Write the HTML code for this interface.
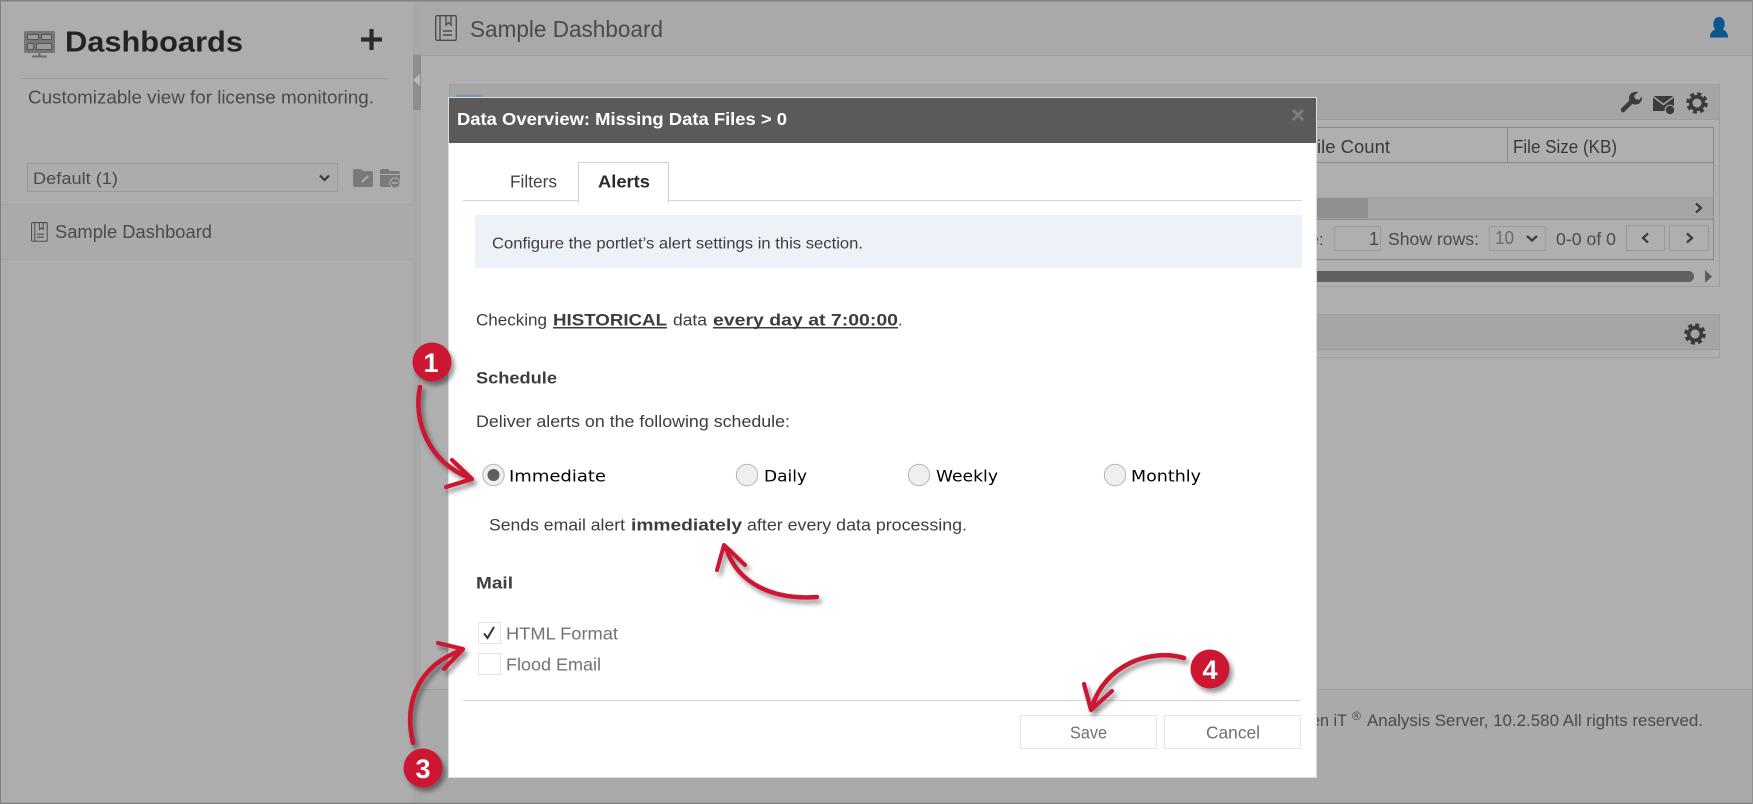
<!DOCTYPE html>
<html><head><meta charset="utf-8"><title>Sample Dashboard</title>
<style>
html,body{margin:0;padding:0;width:1753px;height:804px;overflow:hidden;background:#afafaf}
svg{display:block}
text{font-family:"Liberation Sans",Arial,sans-serif;fill:#484848;font-size:16px}
.b{font-weight:bold}
.d{font-family:"DejaVu Sans",sans-serif;fill:#000;font-size:16px}
.s{fill:#4a4a4a}
.m{fill:#3d3d3d;font-size:16.5px}
</style></head><body>
<svg width="1753" height="804" viewBox="0 0 1753 804" xmlns="http://www.w3.org/2000/svg">
<defs>
<filter id="sh" x="-40%" y="-40%" width="200%" height="200%"><feDropShadow dx="3" dy="4" stdDeviation="2.5" flood-color="#000" flood-opacity=".42"/></filter>
<g id="book" fill="none" stroke="#4e4e4e" stroke-width="1.4"><rect x=".7" y=".7" width="20.6" height="24.6" rx="1.5"/><path d="M5 1v24M11 1v9l2.5-2.5L16 10V1M8 16h9M8 20h9"/></g>
<g id="gear"><circle r="6.3" fill="none" stroke="#3b3b3b" stroke-width="3.6"/><circle r="8.8" fill="none" stroke="#3b3b3b" stroke-width="4" stroke-dasharray="3.9 3"/></g>
</defs>

<!-- backgrounds -->
<rect width="1753" height="804" fill="#afafaf"/>
<rect x="0" y="0" width="413" height="804" fill="#adadad"/>
<rect x="0" y="204" width="413" height="55" fill="#aaaaaa"/>
<rect x="0" y="204" width="413" height="1" fill="#a3a3a3"/>
<rect x="0" y="259" width="413" height="1" fill="#a3a3a3"/>
<rect x="413" y="0" width="8" height="804" fill="#a8a8a8"/>
<rect x="413" y="55" width="8" height="55" fill="#8e8e8e"/>
<path d="M420 74v12l-7-6z" fill="#b8b8b8"/>
<rect x="421" y="0" width="1332" height="55" fill="#a9a9a9"/>
<rect x="421" y="55" width="1332" height="1" fill="#a0a0a0"/>
<rect x="421" y="689" width="1332" height="115" fill="#aaaaaa"/>
<rect x="413" y="689" width="1340" height="1" fill="#9e9e9e"/>
<rect width="1753" height="1.5" fill="#808080"/>
<rect y="802.6" width="1753" height="1.4" fill="#808080"/>
<rect width="1" height="804" fill="#808080"/>
<rect x="1752" width="1" height="804" fill="#909090"/>

<!-- sidebar -->
<rect x="24" y="31" width="31" height="22" rx="1.500" fill="#767676"/>
<g fill="#9a9a9a" stroke="#565656" stroke-width="1">
<rect x="27.500" y="34.500" width="11" height="5"/><rect x="41.500" y="34.500" width="10" height="5"/>
<rect x="27.500" y="43.500" width="6" height="6"/><rect x="36.500" y="43.500" width="15" height="6"/>
</g>
<path d="M39.500 53v3M32 56.500h15" stroke="#6a6a6a" stroke-width="2" fill="none"/>
<text x="65" y="51.500" class="b" style="font-size:29px;fill:#232323" textLength="178" lengthAdjust="spacingAndGlyphs">Dashboards</text>
<path d="M371.500 29v21M361 39.500h21" stroke="#2b2b2b" stroke-width="4.200"/>
<rect x="21" y="78" width="367" height="1" fill="#9d9d9d"/>
<text x="28" y="103.500" style="font-size:18px" class="s" textLength="346" lengthAdjust="spacingAndGlyphs">Customizable view for license monitoring.</text>
<rect x="27.500" y="163.500" width="310" height="28" fill="#acacac" stroke="#9a9a9a"/>
<text x="33" y="184" style="font-size:17px" class="s" textLength="85" lengthAdjust="spacingAndGlyphs">Default (1)</text>
<path d="M320 175.500l4.500 4.500 4.500-4.500" fill="none" stroke="#3a3a3a" stroke-width="2.200"/>
<path d="M353 171q0-2 2-2h6l2 2h8q2 0 2 2v12q0 2-2 2h-16q-2 0-2-2z" fill="#7a7a7a"/>
<path d="M362 182l6-6" stroke="#adadad" stroke-width="2"/>
<path d="M380 171q0-2 2-2h6l2 2h8q2 0 2 2v12q0 2-2 2h-16q-2 0-2-2z" fill="#7a7a7a"/>
<path d="M380 174.500h20" stroke="#adadad"/>
<circle cx="395" cy="183" r="5" fill="#7a7a7a" stroke="#adadad"/><path d="M392 183h6" stroke="#adadad" stroke-width="1.500"/>
<use href="#book" transform="translate(31 222) scale(.76)"/>
<text x="55" y="238" style="font-size:18px" class="s" textLength="157" lengthAdjust="spacingAndGlyphs">Sample Dashboard</text>

<!-- top header -->
<use href="#book" transform="translate(435 15)"/>
<text x="470" y="37" style="font-size:23px" class="s" textLength="193" lengthAdjust="spacingAndGlyphs">Sample Dashboard</text>
<ellipse cx="1719" cy="24" rx="5.700" ry="7" fill="#08568c"/>
<path d="M1710 37.500c0-5 2.500-7 6-8.500h6c3.500 1.500 6 3.500 6 8.500z" fill="#08568c"/>

<!-- portlet 1 -->
<rect x="449.500" y="84.500" width="1270" height="202" fill="#afafaf" stroke="#9f9f9f"/>
<rect x="450" y="85" width="1269" height="34" fill="#a5a5a5"/>
<rect x="450" y="119" width="1269" height="1" fill="#9c9c9c"/>
<rect x="456" y="95" width="25" height="4" fill="#7d93a8"/>
<path d="M1623 110l10-10" stroke="#3b3b3b" stroke-width="4.500" stroke-linecap="round"/>
<path d="M1630 99c0-4 4-7 9-6l-4 4 1.500 3 3.500 1 3-3.500c.5 5-3 8.500-7 8-3 0-6-3-6-6.500z" fill="#3b3b3b" transform="translate(-1 -1) scale(1)"/>
<path d="M1653 96h21v15h-21z" fill="#3b3b3b"/><path d="M1653 96.500l10.500 8 10.500-8" fill="none" stroke="#a5a5a5" stroke-width="1.500"/>
<circle cx="1670" cy="110" r="4.800" fill="#3b3b3b" stroke="#a5a5a5" stroke-width="1.200"/>
<use href="#gear" transform="translate(1697 103)"/>
<rect x="1300" y="127.500" width="413.500" height="132" fill="none" stroke="#8a8a8a"/>
<rect x="1300" y="162" width="413" height="1" fill="#8a8a8a"/>
<rect x="1507" y="127" width="1" height="35" fill="#8a8a8a"/>
<text x="1317" y="153" style="font-size:18px;fill:#3a3a3a" textLength="73" lengthAdjust="spacingAndGlyphs">ile Count</text>
<text x="1513" y="153" style="font-size:18px;fill:#3a3a3a" textLength="104" lengthAdjust="spacingAndGlyphs">File Size (KB)</text>
<rect x="1300" y="197" width="413" height="22" fill="#a5a5a5"/>
<rect x="1300" y="198" width="68" height="20" fill="#8f8f8f"/>
<path d="M1696 203.500l5 4.500-5 4.500" fill="none" stroke="#3a3a3a" stroke-width="2.200"/>
<rect x="1300" y="219" width="413" height="1" fill="#8a8a8a"/>
<text x="1309.500" y="245" style="font-size:17px" class="s">e:</text>
<rect x="1334.500" y="226.500" width="46" height="24" fill="#afafaf" stroke="#9a9a9a"/>
<text x="1369" y="245" style="font-size:18px" class="s">1</text>
<text x="1388" y="245" style="font-size:17.500px" class="s" textLength="91" lengthAdjust="spacingAndGlyphs">Show rows:</text>
<rect x="1489.500" y="226.500" width="56" height="24" fill="#afafaf" stroke="#9a9a9a"/>
<text x="1495" y="244" style="font-size:18px;fill:#6c6c6c" textLength="19" lengthAdjust="spacingAndGlyphs">10</text>
<path d="M1527 236l5 4.500 5-4.500" fill="none" stroke="#3a3a3a" stroke-width="2.200"/>
<text x="1556" y="245" style="font-size:17.500px" class="s" textLength="60" lengthAdjust="spacingAndGlyphs">0-0 of 0</text>
<rect x="1626.500" y="225.500" width="38" height="25" fill="#afafaf" stroke="#9a9a9a"/>
<rect x="1669.500" y="225.500" width="39" height="25" fill="#afafaf" stroke="#9a9a9a"/>
<path d="M1648 233.500l-5 4.500 5 4.500M1687 233.500l5 4.500-5 4.500" fill="none" stroke="#3a3a3a" stroke-width="2.200"/>
<rect x="1300" y="271" width="394" height="11" rx="5.500" fill="#616161"/>
<path d="M1705 270v13l7-6.500z" fill="#5d5d5d"/>

<!-- portlet 2 -->
<rect x="449.500" y="314.500" width="1270" height="43" fill="#afafaf" stroke="#9f9f9f"/>
<rect x="450" y="315" width="1269" height="34" fill="#a5a5a5"/>
<rect x="450" y="349" width="1269" height="1" fill="#9c9c9c"/>
<use href="#gear" transform="translate(1695 334)"/>

<!-- footer -->
<text x="1311" y="726" style="font-size:17px" class="s" textLength="36" lengthAdjust="spacingAndGlyphs">en iT</text>
<text x="1352" y="720" style="font-size:12px" class="s">®</text>
<text x="1367" y="726" style="font-size:17px" class="s" textLength="336" lengthAdjust="spacingAndGlyphs">Analysis Server, 10.2.580 All rights reserved.</text>

<!-- modal -->
<rect x="448.500" y="97.500" width="868" height="680" fill="#fff" stroke="#dcdcdc"/>
<rect x="449" y="98" width="867" height="45" fill="#5a5a5a"/>
<text x="457" y="125" class="b" style="font-size:17.500px;fill:#fff;font-weight:bold" textLength="330" lengthAdjust="spacingAndGlyphs">Data Overview: Missing Data Files &gt; 0</text>
<path d="M1293 110l10 10M1303 110l-10 10" stroke="#7d7d7d" stroke-width="3"/>

<rect x="463" y="200" width="839" height="1" fill="#d6d6d6"/>
<path d="M578.500 203v-40.500h90v40.500" fill="#fff" stroke="#d2d2d2"/>
<rect x="579" y="200" width="89" height="3" fill="#fff"/>
<text x="510" y="187.500" style="font-size:17.500px;fill:#444" textLength="47" lengthAdjust="spacingAndGlyphs">Filters</text>
<text x="598" y="187.500" style="font-size:17.500px;fill:#2b2b2b;font-weight:bold" textLength="52" lengthAdjust="spacingAndGlyphs">Alerts</text>
<rect x="475" y="215" width="827" height="53" fill="#edf2f9"/>
<text x="492" y="248.500" class="m" style="font-size:16px" textLength="371" lengthAdjust="spacingAndGlyphs">Configure the portlet’s alert settings in this section.</text>

<text x="476" y="325.500" class="m" textLength="71" lengthAdjust="spacingAndGlyphs">Checking</text>
<text x="553" y="325.500" class="m" style="font-weight:bold" textLength="114" lengthAdjust="spacingAndGlyphs">HISTORICAL</text>
<rect x="553" y="327" width="114" height="1.500" fill="#3d3d3d"/>
<text x="673" y="325.500" class="m" textLength="34" lengthAdjust="spacingAndGlyphs">data</text>
<text x="713" y="325.500" class="m" style="font-weight:bold" textLength="185" lengthAdjust="spacingAndGlyphs">every day at 7:00:00</text>
<rect x="713" y="327" width="185" height="1.500" fill="#3d3d3d"/>
<text x="898" y="325.500" class="m">.</text>

<text x="476" y="383.500" class="m" style="font-weight:bold" textLength="81" lengthAdjust="spacingAndGlyphs">Schedule</text>
<text x="476" y="427" class="m" textLength="314" lengthAdjust="spacingAndGlyphs">Deliver alerts on the following schedule:</text>

<g fill="#efefef" stroke="#b4b4b4">
<circle cx="493.500" cy="475" r="10.700"/>
<circle cx="747" cy="475" r="10.700"/>
<circle cx="919" cy="475" r="10.700"/>
<circle cx="1115" cy="475" r="10.700"/>
</g>
<circle cx="493.500" cy="475" r="6" fill="#5f5f5f"/>
<text x="509" y="481.500" class="d" textLength="97" lengthAdjust="spacingAndGlyphs">Immediate</text>
<text x="764" y="481.500" class="d" textLength="43" lengthAdjust="spacingAndGlyphs">Daily</text>
<text x="936" y="481.500" class="d" textLength="62" lengthAdjust="spacingAndGlyphs">Weekly</text>
<text x="1131" y="481.500" class="d" textLength="70" lengthAdjust="spacingAndGlyphs">Monthly</text>

<text x="489" y="530.500" class="m" textLength="136" lengthAdjust="spacingAndGlyphs">Sends email alert</text>
<text x="631" y="530.500" class="m" style="font-weight:bold" textLength="111" lengthAdjust="spacingAndGlyphs">immediately</text>
<text x="747" y="530.500" class="m" textLength="220" lengthAdjust="spacingAndGlyphs">after every data processing.</text>

<text x="476" y="588.500" class="m" style="font-weight:bold" textLength="37" lengthAdjust="spacingAndGlyphs">Mail</text>
<rect x="478.500" y="622.500" width="22" height="21" fill="#fff" stroke="#e4e4e4"/>
<path d="M484 633.500l3.500 4.500 6.500-11" fill="none" stroke="#333" stroke-width="2"/>
<rect x="478.500" y="653.500" width="22" height="21" fill="#fff" stroke="#e4e4e4"/>
<text x="506" y="639.500" style="font-size:17.500px;fill:#737373" textLength="112" lengthAdjust="spacingAndGlyphs">HTML Format</text>
<text x="506" y="670.500" style="font-size:17.500px;fill:#737373" textLength="95" lengthAdjust="spacingAndGlyphs">Flood Email</text>

<rect x="463" y="700" width="838" height="1" fill="#d6d6d6"/>
<rect x="1020.500" y="715.500" width="136" height="33" fill="#fff" stroke="#e4e4e4"/>
<rect x="1164.500" y="715.500" width="136" height="33" fill="#fff" stroke="#e4e4e4"/>
<text x="1070" y="738.500" style="font-size:17.500px;fill:#707070" textLength="37" lengthAdjust="spacingAndGlyphs">Save</text>
<text x="1206" y="738.500" style="font-size:17.500px;fill:#707070" textLength="54" lengthAdjust="spacingAndGlyphs">Cancel</text>

<!-- annotations -->
<g fill="none" stroke="#cc1531" stroke-linecap="round" stroke-linejoin="round" filter="url(#sh)">
<path d="M420 387C413 420 428 462 470 478" stroke-width="4.600"/>
<path d="M452 460L472 479L446 487" stroke-width="4.200"/>
<path d="M817 597C775 600 738 585 726 548" stroke-width="4.400"/>
<path d="M717 570L724 545L745 565" stroke-width="4"/>
<path d="M413 743C403 700 420 665 462 650" stroke-width="4.600"/>
<path d="M438 643L463 649L444 669" stroke-width="4.200"/>
<path d="M1184 658C1150 648 1105 665 1092 707" stroke-width="4.600"/>
<path d="M1084 684L1091 710L1112 691" stroke-width="4.200"/>
</g>
<g filter="url(#sh)" fill="#cc1531">
<circle cx="432" cy="362" r="19.500"/>
<circle cx="423" cy="768" r="19.500"/>
<circle cx="1210" cy="669" r="19.500"/>
</g>
<g text-anchor="middle">
<text x="431" y="372" style="font-size:27px;fill:#fff;font-weight:bold">1</text>
<text x="423" y="778" style="font-size:27px;fill:#fff;font-weight:bold">3</text>
<text x="1210" y="679" style="font-size:27px;fill:#fff;font-weight:bold">4</text>
</g>
</svg>
</body></html>
